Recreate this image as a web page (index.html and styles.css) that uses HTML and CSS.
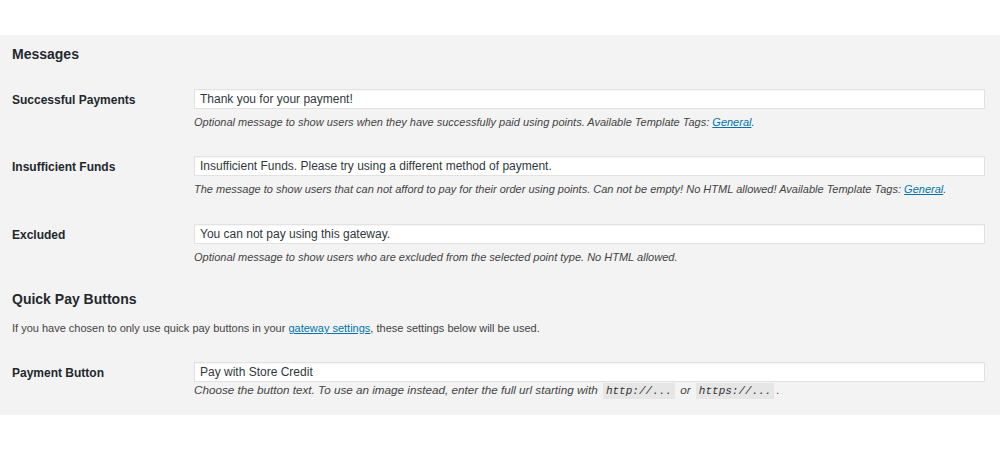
FILE: index.html
```html
<!DOCTYPE html>
<html>
<head>
<meta charset="utf-8">
<link rel="stylesheet" href="styles.css">
</head>
<body>
<div class="panel">
  <h2 class="heading">Messages</h2>

  <div class="row">
    <div class="label">Successful Payments</div>
    <div class="field">
      <div class="input">Thank you for your payment!</div>
      <p class="desc">Optional message to show users when they have successfully paid using points. Available Template Tags: <a href="#">General</a>.</p>
    </div>
  </div>

  <div class="row">
    <div class="label">Insufficient Funds</div>
    <div class="field">
      <div class="input">Insufficient Funds. Please try using a different method of payment.</div>
      <p class="desc">The message to show users that can not afford to pay for their order using points. Can not be empty! No HTML allowed! Available Template Tags: <a href="#">General</a>.</p>
    </div>
  </div>

  <div class="row row-third">
    <div class="label">Excluded</div>
    <div class="field">
      <div class="input">You can not pay using this gateway.</div>
      <p class="desc">Optional message to show users who are excluded from the selected point type. No HTML allowed.</p>
    </div>
  </div>

  <h2 class="heading heading-second">Quick Pay Buttons</h2>
  <p class="intro">If you have chosen to only use quick pay buttons in your <a href="#">gateway settings</a>, these settings below will be used.</p>

  <div class="row">
    <div class="label">Payment Button</div>
    <div class="field">
      <div class="input">Pay with Store Credit</div>
      <p class="desc desc-code">Choose the button text. To use an image instead, enter the full url starting with <code>http://...</code> or <code>https://...</code>.</p>
    </div>
  </div>
</div>
</body>
</html>
```

FILE: styles.css
```css
html, body {
  margin: 0;
  padding: 0;
  background: #ffffff;
}

body {
  font-family: "Liberation Sans", Arial, sans-serif;
  color: #23282d;
}

.panel {
  margin-top: 35px;
  background: #f3f3f3;
  padding: 10px 15px 16px 12px;
}

.heading {
  margin: 0;
  font-size: 14px;
  line-height: 18px;
  font-weight: bold;
  color: #23282d;
}

.heading-second {
  margin-top: 26px;
}

.intro {
  margin: 13px 0 0;
  font-size: 11px;
  line-height: 14px;
  color: #444;
}

.row {
  display: grid;
  grid-template-columns: 182px 1fr;
  margin-top: 27px;
}

.heading + .row {
  margin-top: 26px;
}

.row-third {
  margin-top: 28px;
}

.label {
  font-size: 12px;
  font-weight: bold;
  line-height: 20px;
  padding-top: 1px;
  color: #23282d;
}

.input {
  box-sizing: border-box;
  height: 20px;
  background: #fff;
  border: 1px solid #e2e2e2;
  box-shadow: inset 0 1px 1px rgba(0,0,0,0.04);
  font-size: 12px;
  line-height: 18px;
  padding: 0 5px;
  color: #32373c;
  white-space: nowrap;
  overflow: hidden;
}

.desc {
  margin: 6px 0 0;
  font-size: 11px;
  line-height: 14px;
  font-style: italic;
  color: #444;
}

.desc-code {
  margin-top: 0;
  font-size: 11.7px;
  line-height: 16px;
}

a {
  color: #0073aa;
  text-decoration: underline;
}

code {
  font-family: "Liberation Mono", "Courier New", monospace;
  font-style: italic;
  font-size: 11px;
  background: #e6e6e6;
  padding: 2px 3px;
  margin: 0 2px;
  color: #333;
}
```
